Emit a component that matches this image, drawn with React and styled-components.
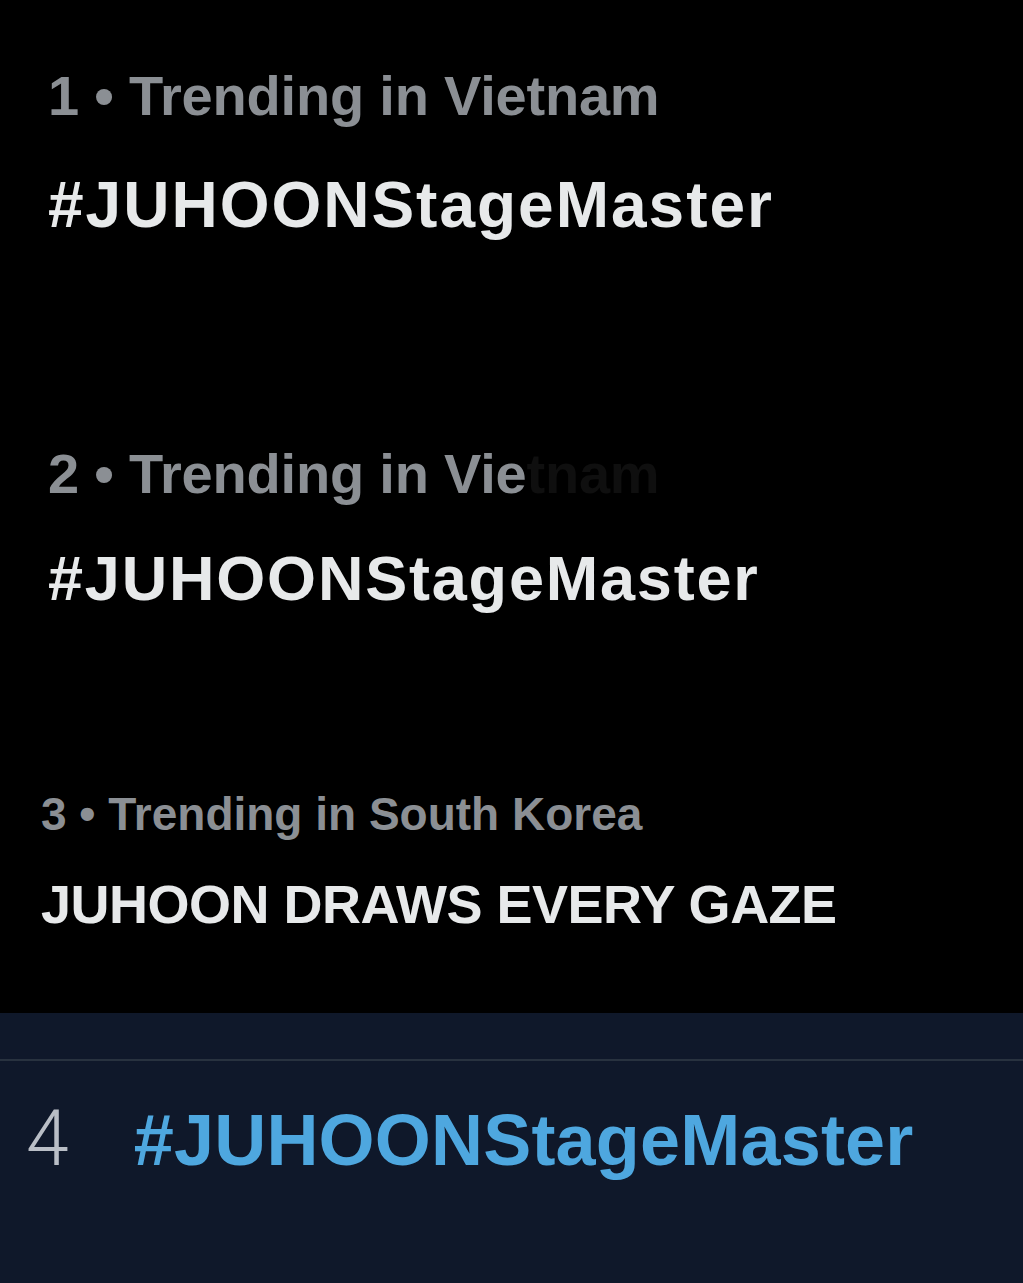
import React from "react";
import styled, { createGlobalStyle } from "styled-components";

const GlobalStyle = createGlobalStyle`
  html, body {
    margin: 0;
    padding: 0;
    background: #000;
  }
  body {
    font-family: "Liberation Sans", Arial, sans-serif;
  }
`;

const Page = styled.div`
  display: flex;
  flex-direction: column;
  min-height: 1283px;
  background: #000;
  overflow: hidden;
`;

const TrendList = styled.div`
  display: flex;
  flex-direction: column;
  padding-top: 68px;
`;

const TrendItem = styled.section`
  display: flex;
  flex-direction: column;
  padding-left: ${(p) => p.$indent}px;
  margin-top: ${(p) => p.$top || 0}px;
`;

const Meta = styled.div`
  font-size: ${(p) => p.$size}px;
  line-height: 1;
  font-weight: 700;
  color: #8b8f94;
  letter-spacing: ${(p) => p.$spacing || 0}px;
  white-space: nowrap;
`;

// the rest of "Vietnam" is blurred out in the source
const Faded = styled.span`
  color: #0f0f0f;
`;

const Title = styled.div`
  margin-top: ${(p) => p.$gap}px;
  font-size: ${(p) => p.$size}px;
  line-height: 1;
  font-weight: 700;
  color: #e7e9ea;
  letter-spacing: ${(p) => p.$spacing || 0}px;
  white-space: nowrap;
`;

const Panel = styled.div`
  flex: 1;
  margin-top: 82px;
  padding-top: 46px;
  background: #0f182a;
`;

const Divider = styled.div`
  height: 2px;
  background: #28323f;
`;

const RankRow = styled.div`
  display: flex;
  align-items: baseline;
  gap: 65px;
  margin-top: 40px;
  padding-left: 26px;
`;

const Rank = styled.span`
  font-family: Roboto, "Liberation Sans", sans-serif;
  font-weight: 300;
  font-size: 77px;
  line-height: 1;
  color: #b9bec6;
`;

const Tag = styled.span`
  font-size: 72px;
  line-height: 1;
  font-weight: 700;
  color: #4ea7df;
  letter-spacing: 0.2px;
  white-space: nowrap;
`;

const trends = [
  {
    id: 1,
    indent: 48,
    top: 0,
    meta: "1 • Trending in Vietnam",
    metaSize: 56,
    metaSpacing: -0.2,
    title: "#JUHOONStageMaster",
    titleSize: 64,
    titleSpacing: 2,
    gap: 49,
  },
  {
    id: 2,
    indent: 48,
    top: 209,
    meta: "2 • Trending in Vie",
    hidden: "tnam",
    metaSize: 56,
    metaSpacing: -0.2,
    title: "#JUHOONStageMaster",
    titleSize: 63,
    titleSpacing: 1.8,
    gap: 45,
  },
  {
    id: 3,
    indent: 41,
    top: 181,
    meta: "3 • Trending in South Korea",
    metaSize: 46,
    metaSpacing: 0,
    title: "JUHOON DRAWS EVERY GAZE",
    titleSize: 54,
    titleSpacing: -0.5,
    gap: 40,
  },
];

export default function App() {
  return (
    <>
      <GlobalStyle />
      <Page>
        <TrendList>
          {trends.map((t) => (
            <TrendItem key={t.id} $indent={t.indent} $top={t.top}>
              <Meta $size={t.metaSize} $spacing={t.metaSpacing}>
                {t.meta}
                {t.hidden && <Faded>{t.hidden}</Faded>}
              </Meta>
              <Title $size={t.titleSize} $spacing={t.titleSpacing} $gap={t.gap}>
                {t.title}
              </Title>
            </TrendItem>
          ))}
        </TrendList>
        <Panel>
          <Divider />
          <RankRow>
            <Rank>4</Rank>
            <Tag>#JUHOONStageMaster</Tag>
          </RankRow>
        </Panel>
      </Page>
    </>
  );
}
